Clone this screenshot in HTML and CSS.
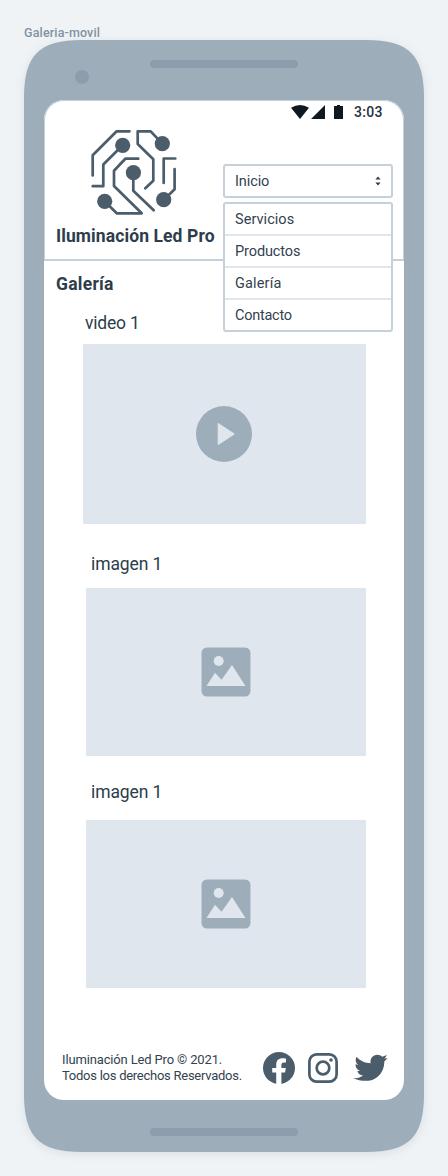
FILE: index.html
```html
<!DOCTYPE html>
<html lang="es">
<head>
<meta charset="utf-8">
<title>Galeria-movil</title>
<link rel="stylesheet" href="styles.css">
</head>
<body>
<div class="frame-name"><span>Galeria-movil</span></div>
<div class="phone">
  <svg class="phone-shape" viewBox="0 0 400 1112"><path d="M0 58C0 15 15 0 58 0H342C385 0 400 15 400 58V1054C400 1097 385 1112 342 1112H58C15 1112 0 1097 0 1054Z"/></svg>
  <div class="phone-top"><i class="camera"></i><i class="speaker"></i></div>
  <main class="screen">
    <header class="header">
      <div class="status">
        <svg class="status-icons" viewBox="0 0 54 16"><path d="M0 3.7Q9 -1.7 18 3.7L9 15ZM20 15 34 1V15ZM43 2H46V1H49V2H52V15H43Z"/></svg>
        <span class="time">3:03</span>
      </div>
      <div class="header-row">
        <div class="brand">
          <svg class="logo" viewBox="90 128 88 88">
            <g class="tracks">
              <path d="M129.5 131.3H116.7L92.7 155.3V175.5"/>
              <path d="M122.7 145.3 103.3 164.5V186.2H92.7"/>
              <path d="M162.3 143.7 150.7 131.3H137.7V144L153.3 159.2V180.7L145.3 188.3"/>
              <path d="M175.3 158.5H163.7V183"/>
              <path d="M174.6 169V189.3L163.7 200"/>
              <path d="M133.3 172.7V190.7L153.7 210.3"/>
              <path d="M138.3 158.7H125.3L114 170.7V186L141.7 213.3H116.7L104.7 201.3"/>
            </g>
            <circle cx="122.7" cy="145.3" r="7.6"/><circle cx="162.3" cy="143.7" r="7.6"/><circle cx="133.4" cy="172.7" r="7.6"/><circle cx="104.7" cy="201.3" r="7.6"/><circle cx="163.7" cy="199.7" r="7.6"/>
          </svg>
          <div class="brand-name"><span>Iluminación Led Pro</span></div>
        </div>
        <nav class="menu">
          <div class="select"><span class="t-inicio">Inicio</span><svg class="sort" viewBox="0 0 6 10"><path d="M.4 3.6 3 .5 5.6 3.6ZM.4 6.4 3 9.5 5.6 6.4Z"/></svg></div>
          <ul class="options">
            <li><span class="t-servicios">Servicios</span></li>
            <li><span class="t-productos">Productos</span></li>
            <li><span class="t-galeria">Galería</span></li>
            <li><span class="t-contacto">Contacto</span></li>
          </ul>
        </nav>
      </div>
    </header>
    <h1 class="title"><span>Galería</span></h1>
    <h2 class="label label-video"><span class="t-video">video 1</span></h2>
    <div class="media media-video">
      <svg class="play" viewBox="0 0 56 56"><circle cx="28" cy="28" r="28"/><path d="M22.2 17.4 38.3 28 22.2 38.6Z"/></svg>
    </div>
    <h2 class="label label-first"><span class="t-imagen">imagen 1</span></h2>
    <div class="media media-first">
      <svg class="picture" viewBox="0 0 50 50"><rect x=".5" y=".5" width="49" height="49" rx="5.5"/><circle cx="17.7" cy="14" r="5"/><path d="M5.5 39 14 25.7 20.5 32.8 31 18 44.5 39Z"/></svg>
    </div>
    <h2 class="label label-second"><span class="t-imagen">imagen 1</span></h2>
    <div class="media media-second">
      <svg class="picture" viewBox="0 0 50 50"><rect x=".5" y=".5" width="49" height="49" rx="5.5"/><circle cx="17.7" cy="14" r="5"/><path d="M5.5 39 14 25.7 20.5 32.8 31 18 44.5 39Z"/></svg>
    </div>
    <footer class="footer">
      <p class="copyright"><span class="t-copy">Iluminación Led Pro © 2021.</span><br><span class="t-rights">Todos los derechos Reservados.</span></p>
      <svg class="facebook" viewBox="0 0 32 32"><circle cx="16" cy="16" r="16"/><path d="M13.2 32V20.6H9.2V16H13.2V12.6C13.2 8.4 15.7 6.2 19.4 6.2 21.2 6.2 23 6.5 23 6.5V10.4H21C19 10.4 18.4 11.5 18.4 12.9V16H22.8L22.1 20.6H18.4V32Z"/></svg>
      <svg class="instagram" viewBox="0 0 30 30"><rect x="1.4" y="1.4" width="27.2" height="27.2" rx="7.2"/><circle cx="15" cy="15" r="6.3"/><circle class="dot" cx="23" cy="7" r="1.8"/></svg>
      <svg class="twitter" viewBox="5 6 35 27"><path d="M5 30C9 30.5 12.5 29.5 15 27.5 12 27.3 10 25.6 9.3 23H12C9 21.7 7.4 19.2 7.5 16.2L10.2 17C7.5 14.9 6.9 11.6 8.6 8.7 12 12.6 17 15 22.6 15.2 21.7 10.5 25 6.7 29.3 6.7 31.3 6.7 33 7.4 34.3 8.8L38.8 7C38.2 8.6 37.4 9.6 36.2 10.6L39.6 10 36.3 13.4C36.5 23 30 32.8 18 32.8 13 32.8 9 32 5 30Z"/></svg>
    </footer>
  </main>
  <div class="phone-bottom"><i class="speaker"></i></div>
</div>
</body>
</html>
```
FILE: styles.css
```css
* { box-sizing: border-box; }
body { margin: 0; width: 448px; height: 1176px; overflow: hidden; background: #eff3f6; color: #2d3d4b; font-family: Roboto, "Liberation Sans", sans-serif; }
h1, h2, p, ul { margin: 0; padding: 0; }
svg { display: block; flex: none; }
span { white-space: nowrap; }
.frame-name { height: 40px; padding: 25px 0 0 24px; color: #8292a2; font-size: 12.5px; font-weight: 500; line-height: 15px; }
.frame-name span { letter-spacing: .15px; }
.phone { position: relative; width: 400px; height: 1112px; margin-left: 24px; display: flex; flex-direction: column; }
.phone-shape { position: absolute; inset: 0; z-index: -1; width: 400px; height: 1112px; overflow: visible; fill: #9eadba; filter: drop-shadow(0 2px 5px rgba(60, 80, 100, .12)); }
.phone-top { height: 60px; display: flex; padding: 20px 0 0 51px; }
.camera { width: 14px; height: 14px; margin-top: 10px; border-radius: 50%; background: #8e9dad; }
.speaker { display: block; width: 148px; height: 8px; border-radius: 4px; background: #8e9dad; }
.phone-top .speaker { margin-left: 61px; }
.phone-bottom { padding: 28px 126px 0; }
.screen { width: 360px; height: 1000px; margin-left: 20px; display: flex; flex-direction: column; background: #fff; border-radius: 20px; }
.header { height: 161px; flex: none; border: 1px solid #c4d0da; border-bottom-width: 2px; border-radius: 20px 20px 0 0; }
.status { height: 22px; display: flex; padding: 3px 0 0 246px; }
.status-icons { width: 54px; height: 16px; fill: #101920; }
.time { margin-left: 9px; font-size: 14px; font-weight: 500; line-height: 17px; letter-spacing: .3px; color: #25323d; }
.header-row { display: flex; height: 136px; }
.brand { width: 178px; flex: none; padding-left: 11px; }
.logo { width: 88px; height: 88px; margin: 5px 0 0 34px; fill: #4b5d6b; }
.tracks { fill: none; stroke: #4b5d6b; stroke-width: 2.7; stroke-linecap: round; stroke-linejoin: round; }
.brand-name { margin-top: 9px; font-size: 17.5px; font-weight: 700; line-height: 22px; letter-spacing: .1px; }
.menu { position: relative; z-index: 2; width: 170px; padding-top: 41px; color: #33424f; font-size: 14.5px; }
.select { height: 34px; border: 2px solid #c4d0da; border-radius: 3px; background: #fff; display: flex; align-items: center; justify-content: space-between; padding: 0 10px; }
.sort { width: 6px; height: 10px; fill: #2d3d4b; }
.t-inicio { letter-spacing: -.1px; }
.t-servicios { letter-spacing: .05px; }
.t-productos { letter-spacing: -.1px; }
.t-galeria { letter-spacing: .15px; }
.t-contacto { letter-spacing: -.25px; }
.options { height: 130px; margin-top: 4px; list-style: none; border: 2px solid #c4d0da; border-radius: 3px; background: #fff; }
.options li { height: 32px; padding-left: 10px; line-height: 31px; border-bottom: 2px solid #dfe6ee; }
.options li:last-child { height: 30px; border: 0; }
.title { height: 46px; flex: none; padding: 12px 0 0 12px; font-size: 17.5px; font-weight: 700; line-height: 22px; letter-spacing: .25px; }
.label { font-size: 17.5px; font-weight: 400; line-height: 22px; flex: none; letter-spacing: -.1px; }
.label-video { height: 37px; padding: 5px 0 0 41px; letter-spacing: -.2px; }
.label-first { height: 64px; padding: 29px 0 0 47px; }
.label-second { height: 64px; padding: 25px 0 0 47px; }
.media { display: flex; align-items: center; justify-content: center; flex: none; background: #dfe6ee; }
.media-video { width: 283px; height: 180px; margin-left: 39px; }
.media-first, .media-second { width: 280px; height: 168px; margin-left: 42px; }
.play { width: 56px; height: 56px; margin-right: 1px; fill: #9eadba; }
.play path { fill: #dfe6ee; stroke: #dfe6ee; stroke-width: 1; stroke-linejoin: round; }
.picture { width: 50px; height: 50px; fill: #9eadba; }
.picture circle, .picture path { fill: #dfe6ee; }
.footer { display: flex; margin-top: 63px; padding-left: 18px; height: 49px; }
.copyright { width: 201px; flex: none; padding-top: 1px; font-size: 13px; line-height: 16px; color: #33424f; }
.t-copy { letter-spacing: -.15px; }
.t-rights { letter-spacing: -.26px; }
.facebook { width: 32px; height: 32px; margin-top: 1px; fill: #4b5d6b; }
.facebook path { fill: #fff; }
.instagram { width: 30px; height: 30px; margin: 2px 0 0 13px; fill: none; stroke: #4b5d6b; stroke-width: 2.7; }
.instagram .dot { fill: #4b5d6b; stroke: none; }
.twitter { width: 35px; height: 27px; margin: 3px 0 0 15px; fill: #4b5d6b; }
```
